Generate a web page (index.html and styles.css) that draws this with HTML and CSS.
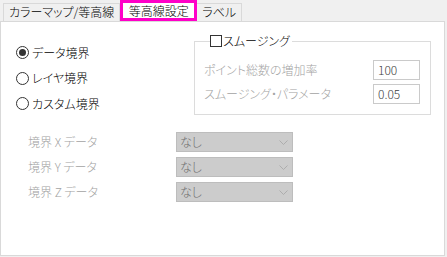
FILE: index.html
```html
<!DOCTYPE html>
<html lang="ja">
<head>
    <meta charset="UTF-8">
    <title>等高線設定</title>
    <link rel="stylesheet" href="styles.css">
</head>
<body>
    <div class="tabs">
        <div class="tab">カラーマップ/等高線</div>
        <div class="tab active">等高線設定</div>
        <div class="tab">ラベル</div>
    </div>
    <div class="panel">
        <div class="top">
            <div class="radios">
                <div class="radio-row"><span class="radio checked"></span>データ境界</div>
                <div class="radio-row"><span class="radio"></span>レイヤ境界</div>
                <div class="radio-row"><span class="radio"></span>カスタム境界</div>
            </div>
            <fieldset class="smooth">
                <legend><span class="check"></span>スムージング</legend>
                <div class="field-row">
                    <span class="dim">ポイント総数の増加率</span>
                    <div class="input">100</div>
                </div>
                <div class="field-row">
                    <span class="dim">スムージング・パラメータ</span>
                    <div class="input">0.05</div>
                </div>
            </fieldset>
        </div>
        <div class="fields">
            <div class="sel-row">
                <span class="dim label">境界 X データ</span>
                <div class="select">なし<svg width="9" height="5" viewBox="0 0 9 5"><polyline points="0.5,0.5 4.5,4.5 8.5,0.5" fill="none" stroke="#adadad"/></svg></div>
            </div>
            <div class="sel-row">
                <span class="dim label">境界 Y データ</span>
                <div class="select">なし<svg width="9" height="5" viewBox="0 0 9 5"><polyline points="0.5,0.5 4.5,4.5 8.5,0.5" fill="none" stroke="#adadad"/></svg></div>
            </div>
            <div class="sel-row">
                <span class="dim label">境界 Z データ</span>
                <div class="select">なし<svg width="9" height="5" viewBox="0 0 9 5"><polyline points="0.5,0.5 4.5,4.5 8.5,0.5" fill="none" stroke="#adadad"/></svg></div>
            </div>
        </div>
    </div>
</body>
</html>
```
FILE: styles.css
```css
body {
    margin: 0;
    background: #f0f0f0;
    font-family: "Noto Sans CJK JP", "Noto Sans", sans-serif;
    font-feature-settings: "palt";
    font-size: 12px;
    font-weight: 300;
    line-height: 14px;
    color: #000000;
}
.tabs {
    display: flex;
    align-items: flex-end;
    height: 21px;
    padding-left: 3px;
}
.tab {
    box-sizing: border-box;
    height: 18px;
    padding: 1px 5px 0 5px;
    border: 1px solid #d9d9d9;
    border-bottom: none;
    background: #f0f0f0;
    white-space: nowrap;
}
.tab + .tab {
    border-left: none;
}
.tab.active {
    height: 21px;
    width: 77px;
    padding: 0;
    border: 3px solid #ff00c8;
    background: #ffffff;
    text-align: center;
    line-height: 15px;
}
.panel {
    box-sizing: border-box;
    width: 445px;
    height: 235px;
    background: #ffffff;
    border: 1px solid #d9d9d9;
}
.top {
    display: flex;
    align-items: flex-start;
    padding: 12px 0 0 15px;
}
.radios {
    width: 178px;
    margin-top: 6px;
}
.radio-row {
    display: flex;
    align-items: center;
    height: 25px;
    gap: 3px;
}
.radio-row:nth-child(2) {
    height: 26px;
}
.radio {
    box-sizing: border-box;
    width: 13px;
    height: 13px;
    border: 1px solid #333333;
    border-radius: 50%;
    display: flex;
    align-items: center;
    justify-content: center;
}
.radio.checked::after {
    content: "";
    width: 7px;
    height: 7px;
    border-radius: 50%;
    background: #333333;
}
.smooth {
    box-sizing: border-box;
    width: 237px;
    margin: 0;
    padding: 0 10px 10px 9px;
    border: 1px solid #dcdcdc;
    min-width: 0;
}
.smooth legend {
    display: flex;
    align-items: center;
    margin-left: 6px;
    padding: 0 2px 0 0;
    height: 14px;
}
.check {
    box-sizing: border-box;
    width: 12px;
    height: 12px;
    border: 1px solid #333333;
    margin-right: 1px;
}
.field-row {
    display: flex;
    align-items: center;
    justify-content: space-between;
    height: 20px;
    margin-top: 4px;
}
.field-row:first-of-type {
    margin-top: 12px;
}
.dim {
    color: #a3a3a3;
}
.input {
    box-sizing: border-box;
    width: 47px;
    height: 20px;
    padding: 2px 0 0 4px;
    border: 1px solid #cacaca;
    color: #3c3c3c;
}
.fields {
    display: flex;
    flex-direction: column;
    gap: 5px;
    margin-top: 16px;
    padding-left: 27px;
}
.sel-row {
    display: flex;
    align-items: center;
}
.label {
    width: 148px;
}
.label::first-letter {
    letter-spacing: 0;
}
.select {
    box-sizing: border-box;
    width: 117px;
    height: 20px;
    padding: 0 4px 0 3px;
    display: flex;
    align-items: center;
    justify-content: space-between;
    background: #cccccc;
    border: 1px solid #bdbdbd;
    color: #6e6e6e;
}
```
